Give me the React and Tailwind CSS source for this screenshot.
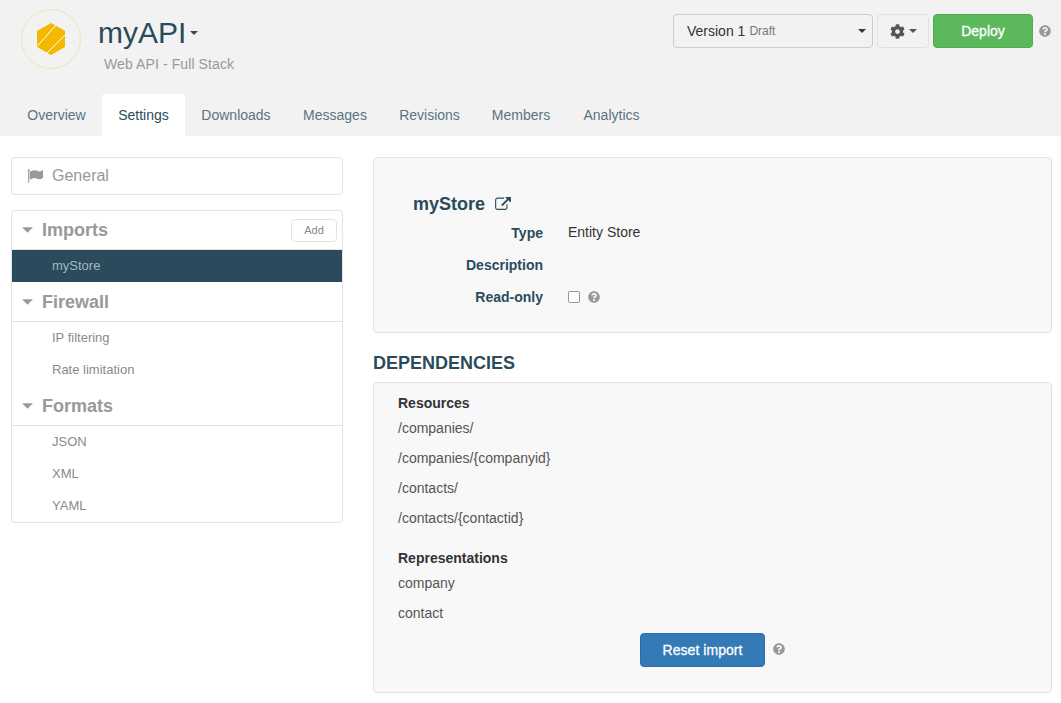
import React from "react";
import { FaCog, FaQuestionCircle } from "react-icons/fa";

const Caret = ({ className = "" }) => (
  <svg className={className} width="8" height="4" viewBox="0 0 8 4"><path d="M0 0h8L4 4z" fill="currentColor" /></svg>
);

const Help = ({ className = "" }) => <FaQuestionCircle className={className} size={12} />;

const External = () => (
  <svg width="16" height="13" viewBox="0 64 1792 1472" fill="#2a4b5b">
    <path d="M1408 928v320q0 119-84.5 203.5t-203.5 84.5h-832q-119 0-203.5-84.5t-84.5-203.5v-832q0-119 84.5-203.5t203.5-84.5h704q14 0 23 9t9 23v64q0 14-9 23t-23 9h-704q-66 0-113 47t-47 113v832q0 66 47 113t113 47h832q66 0 113-47t47-113v-320q0-14 9-23t23-9h64q14 0 23 9t9 23zm384-864v512q0 26-19 45t-45 19-45-19l-176-176-652 652q-10 10-23 10t-23-10l-114-114q-10-10-10-23t10-23l652-652-176-176q-19-19-19-45t19-45 45-19h512q26 0 45 19t19 45z" />
  </svg>
);

const Flag = () => (
  <svg width="16" height="16" viewBox="0 0 1792 1792" fill="#999" className="mr-[9px] -ml-px">
    <path d="M320 256q0 72-64 110v1266q0 13-9.5 22.5t-22.5 9.5h-64q-13 0-22.5-9.5t-9.5-22.5v-1266q-64-38-64-110 0-53 37.5-90.5t90.5-37.5 90.5 37.5 37.5 90.5zm1472 64v763q0 25-12.5 38.5t-39.5 27.5q-215 116-369 116-61 0-123.5-22t-108.5-48-115.5-48-142.5-22q-192 0-464 146-17 9-33 9-26 0-45-19t-19-45v-742q0-32 31-55 21-14 79-43 236-120 421-120 107 0 200 29t219 88q38 19 88 19 54 0 117.5-21t110-47 88-47 54.5-21q26 0 45 19t19 45z" />
  </svg>
);

const Tab = ({ children, active, width }) => (
  <div className={(active
    ? "h-[42px] flex items-center justify-center bg-white text-[#2a4b5b] rounded-t-[3px] "
    : "h-[42px] flex items-center justify-center text-[#5a7482] ") + width}>{children}</div>
);

const GroupHead = ({ children, add }) => (
  <div className="h-[39px] flex items-center border-b border-[#e3e3e3] pl-[10px] pr-[5px]">
    <Caret className="text-[#999] mr-[9px] w-[11px] h-[6px]" />
    <span className="text-[18px] font-bold text-[#999]">{children}</span>
    {add && <span className="ml-auto h-[23px] w-[46px] flex items-center justify-center border border-[#e3e3e3] rounded-[4px] text-[11px] text-[#888]">Add</span>}
  </div>
);

const Item = ({ children, active }) => (
  <div className={active
    ? "h-[32px] flex items-center pl-10 text-[13px] bg-[#2a4b5b] text-[#a9b7be]"
    : "h-[32px] flex items-center pl-10 text-[13px] text-[#8a8a8a]"}>{children}</div>
);

const Field = ({ label, children }) => (
  <div className="h-[32px] flex items-center">
    <div className="w-[130px] pt-[2px] text-right font-bold text-[#2a4b5b]">{label}</div>
    <div className="ml-[25px] flex items-center text-[#333]">{children}</div>
  </div>
);

const Line = ({ children }) => <div className="h-[30px] flex items-center text-[#555]">{children}</div>;

export default function App() {
  return (
    <div className="min-h-[703px] bg-white text-[14px] font-['Liberation_Sans',Arial,sans-serif] overflow-hidden">
      <header className="h-[136px] bg-[#f2f2f2] flex flex-col">
        <div className="h-[94px] flex items-start">
          <div className="ml-[21px] mt-[9px] w-[60px] h-[60px] rounded-full border border-[#f3e3b6] flex items-center justify-center">
            <svg width="28" height="32" viewBox="0 0 28 32">
              <path d="M14 0 28 8v16L14 32 0 24V8z" fill="#f5b800" />
              <path d="M0 23.5 19 2M10 30 28 12" stroke="#fff" strokeWidth="1" fill="none" />
            </svg>
          </div>
          <div className="ml-[17px] mt-[13px]">
            <div className="flex items-center h-[40px]">
              <span className="text-[30px] text-[#2a4b5b] leading-none">myAPI</span>
              <Caret className="ml-[4px] text-[#2a4b5b]" />
            </div>
            <div className="ml-[6px] mt-[1px] text-[14px] tracking-[0.1px] text-[#999]">Web API - Full Stack</div>
          </div>
          <div className="ml-auto mt-[14px] mr-[10px] flex items-center">
            <div className="w-[200px] h-[34px] border border-[#ccc] rounded-[4px] flex items-center pl-[13px] pr-[6px] text-[#333]">
              <span>Version 1</span>
              <span className="ml-[4px] text-[12px] text-[#777]">Draft</span>
              <Caret className="ml-auto text-[#333]" />
            </div>
            <div className="ml-[4px] w-[52px] h-[34px] border border-[#e0e0e0] rounded-[4px] flex items-center justify-center text-[#555]">
              <FaCog size={15} />
              <Caret className="ml-[4px]" />
            </div>
            <div className="ml-[4px] w-[100px] h-[34px] bg-[#5cb85c] border border-[#4cae4c] rounded-[4px] flex items-center justify-center text-white [-webkit-text-stroke:0.3px_white]">Deploy</div>
            <Help className="ml-[6px] text-[#999]" />
          </div>
        </div>
        <nav className="flex pl-[11px]">
          <Tab width="w-[91px]">Overview</Tab>
          <Tab active width="w-[83px]">Settings</Tab>
          <Tab width="w-[102px]">Downloads</Tab>
          <Tab width="w-[96px]">Messages</Tab>
          <Tab width="w-[93px]">Revisions</Tab>
          <Tab width="w-[90px]">Members</Tab>
          <Tab width="w-[91px]">Analytics</Tab>
        </nav>
      </header>
      <main className="flex pt-[21px] pl-[11px] pr-[9px] gap-[30px]">
        <aside className="w-[332px] shrink-0">
          <div className="h-[38px] border border-[#e3e3e3] rounded-[4px] flex items-center pl-[16px] text-[16px] text-[#999]">
            <Flag />General
          </div>
          <div className="mt-[15px] border border-[#e3e3e3] rounded-[4px] overflow-hidden">
            <GroupHead add>Imports</GroupHead>
            <Item active>myStore</Item>
            <div className="mt-px"><GroupHead>Firewall</GroupHead></div>
            <Item>IP filtering</Item>
            <Item>Rate limitation</Item>
            <div className="mt-px"><GroupHead>Formats</GroupHead></div>
            <Item>JSON</Item>
            <Item>XML</Item>
            <Item>YAML</Item>
          </div>
        </aside>
        <section className="flex-1 min-w-0">
          <div className="h-[176px] bg-[#f8f8f8] border border-[#e3e3e3] rounded-[4px] pt-[34px] pl-[39px]">
            <div className="flex items-center h-[24px] text-[18px] font-bold text-[#2a4b5b]">myStore<span className="ml-[10px] -mt-[1px]"><External /></span></div>
            <div>
              <Field label="Type">Entity Store</Field>
              <Field label="Description" />
              <Field label="Read-only">
                <span className="mt-[2px] w-[12px] h-[12px] border border-[#999] rounded-[2px] bg-white" />
                <Help className="mt-[2px] ml-[8px] text-[#999]" />
              </Field>
            </div>
          </div>
          <h2 className="mt-[20px] h-[21px] leading-[21px] text-[18px] font-bold text-[#2a4b5b]">DEPENDENCIES</h2>
          <div className="mt-[8px] h-[311px] bg-[#f8f8f8] border border-[#e3e3e3] rounded-[4px] pl-[24px] pt-[12px]">
            <div className="font-bold text-[#333] h-[17px] leading-[17px]">Resources</div>
            <div className="mt-[1px]">
              <Line>/companies/</Line>
              <Line>/companies/{"{companyid}"}</Line>
              <Line>/contacts/</Line>
              <Line>/contacts/{"{contactid}"}</Line>
            </div>
            <div className="mt-[15px] font-bold text-[#333] h-[20px] leading-[20px]">Representations</div>
            <div>
              <Line>company</Line>
              <Line>contact</Line>
            </div>
            <div className="mt-[5px] flex items-center justify-center pr-[24px]">
              <div className="w-[125px] h-[34px] bg-[#337ab7] border border-[#2e6da4] rounded-[4px] flex items-center justify-center text-white tracking-[0.05px] [-webkit-text-stroke:0.3px_white]">Reset import</div>
              <Help className="ml-[8px] -mt-[2px] text-[#999]" />
            </div>
          </div>
        </section>
      </main>
    </div>
  );
}
